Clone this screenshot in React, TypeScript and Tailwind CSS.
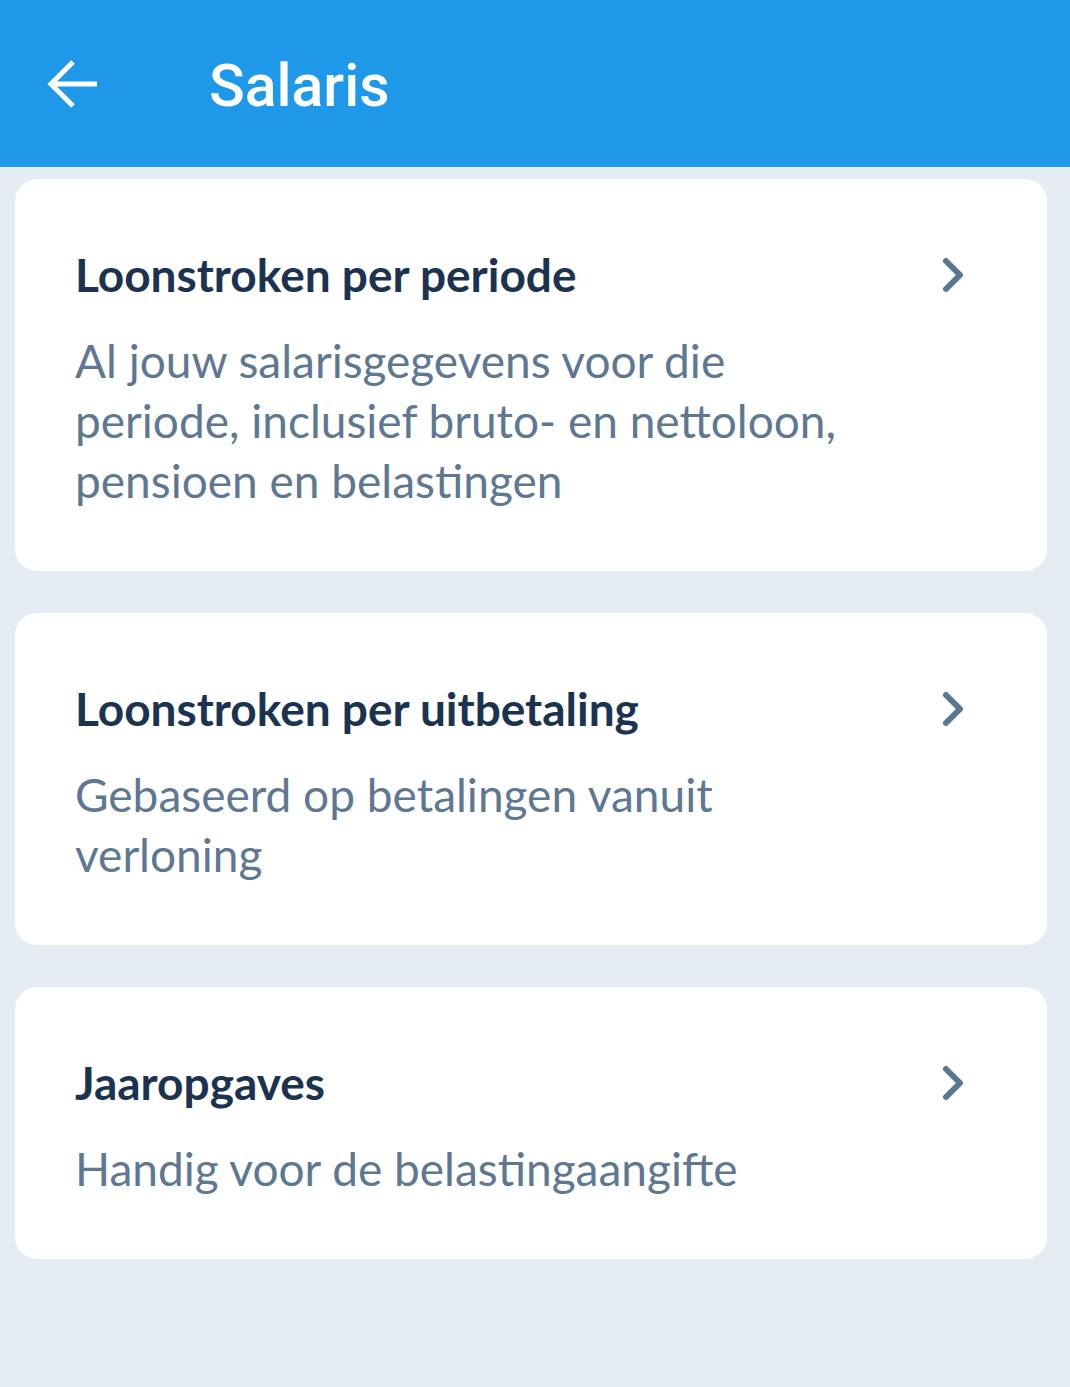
import React from "react";

const items = [
  {
    id: 1,
    title: "Loonstroken per periode",
    lines: [
      "Al jouw salarisgegevens voor die",
      "periode, inclusief bruto- en nettoloon,",
      "pensioen en belastingen",
    ],
  },
  {
    id: 2,
    title: "Loonstroken per uitbetaling",
    lines: ["Gebaseerd op betalingen vanuit", "verloning"],
  },
  {
    id: 3,
    title: "Jaaropgaves",
    lines: ["Handig voor de belastingaangifte"],
  },
];

const Chevron = () => (
  <svg width="28" height="40" viewBox="0 0 28 40" fill="none" className="shrink-0">
    <path
      d="M7 6 L21 20 L7 34"
      stroke="#5b7691"
      strokeWidth="6"
      strokeLinecap="round"
      strokeLinejoin="round"
    />
  </svg>
);

const App = () => {
  return (
    <div className="min-h-[1387px] bg-[#e5ecf4] font-['Lato',sans-serif]">
      {/* App bar */}
      <header className="h-[167px] bg-[#1e98e8] flex items-center">
        <svg width="52" height="52" viewBox="0 0 52 52" fill="none" className="ml-[47px]">
          <path
            d="M50 26 H6 M26 4 L4 26 L26 48"
            stroke="#ffffff"
            strokeWidth="5"
          />
        </svg>
        <h1 className="ml-[110px] text-[59px] font-medium text-white font-['Roboto',sans-serif] leading-none pt-[4px]">
          Salaris
        </h1>
      </header>

      {/* List */}
      <div className="pl-[15px] pr-[23px] pt-[12px] flex flex-col gap-[42px]">
        {items.map((item) => (
          <div
            key={item.id}
            className="bg-white rounded-[22px] pl-[60px] pr-[80px] pt-[70px] pb-[60px] flex items-start"
          >
            <div className="flex-1">
              <h2 className="text-[46px] font-bold text-[#1b3350] leading-[52px]">
                {item.title}
              </h2>
              <div className="mt-[30px] text-[46px] text-[#5e7792] leading-[60px]">
                {item.lines.map((l) => (
                  <div key={l}>{l}</div>
                ))}
              </div>
            </div>
            <div className="mt-[6px]">
              <Chevron />
            </div>
          </div>
        ))}
      </div>
    </div>
  );
};

export default App;
